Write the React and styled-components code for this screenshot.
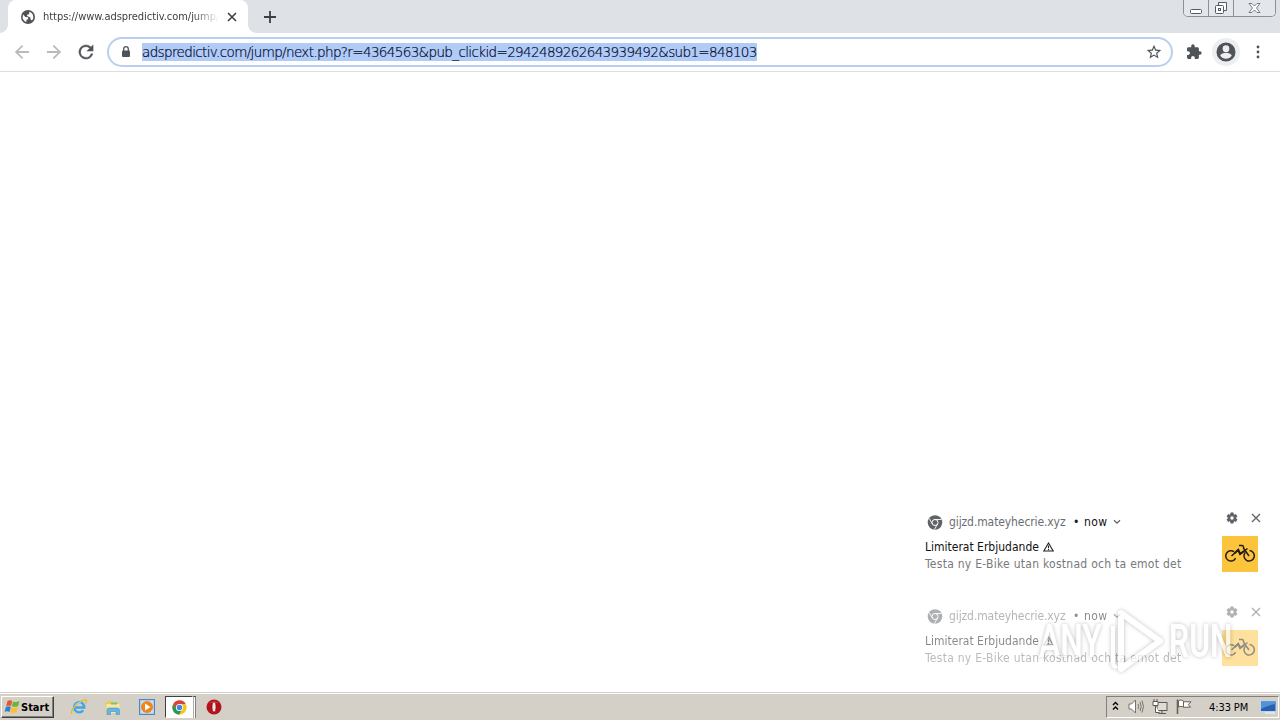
import React from "react";
import styled, { createGlobalStyle } from "styled-components";

const GlobalStyle = createGlobalStyle`
  * {
    box-sizing: border-box;
  }

  body {
    margin: 0;
    overflow: hidden;
    background: #fff;
    font-family: "DejaVu Sans Condensed", "DejaVu Sans", sans-serif;
  }

  svg {
    display: block;
    flex: none;
  }
`;

const notifications = [
  { id: 1, faded: false },
  { id: 2, faded: true },
];

const GlobeIcon = () => (
  <svg width="14" height="14" viewBox="0 0 14 14">
    <circle cx="7" cy="7" r="7" fill="#505357" />
    <path
      d="M2 4.5 L4.5 7 L7 7.2 L7.3 9 L5.6 9.8 L5.2 12 C3 11.2 1.6 9.3 1.6 7 Z M8.4 1.8 C10.5 2.4 12.3 4.3 12.3 7 C12.3 8.4 11.8 9.5 11 10.4 L9.6 9.4 L9.4 7.6 L6 6 L6.2 4.8 L8 4.2 Z"
      fill="#fff"
    />
  </svg>
);

const ChromeMono = () => (
  <svg width="16" height="15" viewBox="-0.5 0 16 15">
    <circle cx="7.5" cy="7.5" r="7.3" fill="#5f6368" />
    <circle cx="7.5" cy="7.5" r="3" fill="none" stroke="#fff" strokeWidth="1" />
    <path d="M7.5 4.5H14M4.9 9L1.6 3.4M10.1 9L6.9 14.6" stroke="#fff" strokeWidth="0.9" />
  </svg>
);

const GearIcon = () => (
  <svg width="12" height="12" viewBox="1 1 22 22">
    <path
      fill="#5f6368"
      stroke="#5f6368"
      d="M19.14 12.94c.04-.3.06-.61.06-.94 0-.32-.02-.64-.07-.94l2.03-1.58a.49.49 0 0 0 .12-.61l-1.92-3.32a.488.488 0 0 0-.59-.22l-2.39.96c-.5-.38-1.03-.7-1.62-.94l-.36-2.54a.484.484 0 0 0-.48-.41h-3.84c-.24 0-.43.17-.47.41l-.36 2.54c-.59.24-1.13.57-1.62.94l-2.39-.96c-.22-.08-.47 0-.59.22L2.74 8.87c-.12.21-.08.47.12.61l2.03 1.58c-.05.3-.09.63-.09.94s.02.64.07.94l-2.03 1.58a.49.49 0 0 0-.12.61l1.92 3.32c.12.22.37.29.59.22l2.39-.96c.5.38 1.03.7 1.62.94l.36 2.54c.05.24.24.41.48.41h3.84c.24 0 .44-.17.47-.41l.36-2.54c.59-.24 1.13-.56 1.62-.94l2.39.96c.22.08.47 0 .59-.22l1.92-3.32c.12-.22.07-.47-.12-.61l-2.01-1.58zM12 15.6A3.6 3.6 0 1 1 12 8.4a3.6 3.6 0 0 1 0 7.2z"
    />
  </svg>
);

const WarningIcon = () => (
  <svg width="11" height="10" viewBox="0 0 11 10">
    <path d="M5.5 1L10.2 9H0.8Z" fill="none" stroke="#222" strokeWidth="1.1" />
    <path d="M5.5 3.6V6.2M5.5 7.1V8.2" stroke="#222" strokeWidth="1.1" />
  </svg>
);

const BikeIcon = () => (
  <svg width="36" height="36" viewBox="0 0 36 36" fill="none" stroke="#211a17" strokeWidth="1.5">
    <path d="M13.6 22.2A5.2 5.2 0 1 1 12 15.7" />
    <path d="M23.4 16.2A5.200 5.200 0 1 0 27.500 14.600" />
    <path d="M17 9.500H20.300Q21.500 9.500 21.700 12.500L27 20" />
    <path d="M9.500 20L16 14L18 18L25.500 12.500" />
    <path d="M12.500 17.200L16.300 13.800L18.200 18L22 15" strokeWidth="2" />
  </svg>
);

const WindowGlyphs = {
  min: (
    <svg width="14" height="8" viewBox="0 0 14 8">
      <rect x="1.5" y="3.5" width="11" height="4" rx="1" fill="#fff" stroke="#555a66" />
    </svg>
  ),
  restore: (
    <svg width="14" height="14" viewBox="0 0 14 14" fill="#fff" stroke="#555a66">
      <path d="M4.5 1.5H12.5V9.5H9.5M4.5 1.5V4.5" />
      <rect x="1.5" y="4.5" width="8" height="8" rx="1" />
      <rect x="4.5" y="7.5" width="2" height="2" />
    </svg>
  ),
  close: (
    <svg width="13" height="12" viewBox="0 0 13 12">
      <path
        d="M1 1.5H4L6.5 4L9 1.5H12L8.5 6L12 10.5H9L6.5 8L4 10.5H1L4.5 6Z"
        fill="#fff"
        stroke="#686d78"
        strokeWidth="0.9"
      />
    </svg>
  ),
};

const WindowsFlag = () => (
  <svg width="17" height="16" viewBox="0 0 17 16">
    <path d="M3.5 2C5.2 1 6.7 1.2 8.2 2L7 7C5.5 6.2 4 6.2 2.2 7Z" fill="#e9552b" />
    <path d="M9 2.4C10.8 3.4 12.8 3.4 15.5 2L14.2 7C12 8 10 8.2 7.9 7.3Z" fill="#6cb33f" />
    <path d="M2 7.8C3.8 7 5.3 7.1 6.8 7.9L5.5 13C4 12.1 2.4 12 .6 12.8Z" fill="#2f7fd0" />
    <path d="M7.6 8.3C9.6 9.1 11.5 9.1 14 8L12.7 13C10.5 14.2 8.2 14.3 6.3 13.3Z" fill="#f9c22d" />
  </svg>
);

const IeIcon = () => (
  <svg width="18" height="18" viewBox="0 0 18 18" fill="none">
    <path d="M4.5 9.500H14.2A5.1 5.1 0 1 0 13.2 12.3" stroke="#3fa7e6" strokeWidth="2.4" />
    <path d="M2 15.700C-1 13.500 9 2 16 1.900C17.4 2.500 16.3 4.500 15.3 5.700" stroke="#e6b93a" strokeWidth="1.3" />
    <path d="M4.8 8C5.5 5.500 8 4.1 11 4.800" stroke="#9bdcf8" strokeWidth="0.8" />
  </svg>
);

const FolderIcon = () => (
  <svg width="17" height="17" viewBox="1 0 17 17">
    <path d="M1.5 3L7 1.5L8 3H14.5V14H1.5Z" fill="#e9ca63" />
    <path d="M2.5 5H15.5V14H2.5Z" fill="#f8e7a2" />
    <path d="M7 3.5H13V5.5H7Z" fill="#7ec46f" />
    <path d="M3 15.500V11Q3 9 5 9H13Q15.5 9 15.5 11V15.500H12V12.5H6.5V15.500Z" fill="#62b7e5" stroke="#3b87bd" strokeWidth="0.5" />
  </svg>
);

const PlayerIcon = () => (
  <svg width="17" height="17" viewBox="0 0 17 17">
    <rect x="0.5" y="0.5" width="15" height="15" fill="#a9cff2" stroke="#4d86c4" />
    <rect x="2.5" y="2.5" width="11" height="11" fill="#e5f1fb" />
    <circle cx="8" cy="8" r="6" fill="#f08519" />
    <path d="M6 4.6L11.5 8L6 11.4Z" fill="#fff" />
  </svg>
);

const ChromeIcon = () => (
  <svg width="15" height="15" viewBox="0 0 16 16">
    <circle cx="8" cy="8" r="7.6" fill="#f6c51d" />
    <path d="M8 .4A7.6 7.6 0 0 1 14.6 4.2H8L4.7 9.9L1.4 4.2A7.6 7.6 0 0 1 8 .4Z" fill="#dd4335" />
    <path d="M1.4 4.2L4.7 9.9L8 11.8H9.6L7.5 15.6A7.6 7.6 0 0 1 1.4 4.2Z" fill="#27975b" />
    <circle cx="8" cy="8" r="3.8" fill="#fff" />
    <circle cx="8" cy="8" r="2.9" fill="#4384ef" />
  </svg>
);

const OperaIcon = () => (
  <svg width="16" height="16" viewBox="0 0 16 16">
    <circle cx="8" cy="8" r="7.5" fill="#b5121b" />
    <path d="M3 4.5A7 7 0 0 1 13 4.5Q8 2 3 4.5Z" fill="#dc6469" />
    <ellipse cx="8" cy="8" rx="2" ry="5" fill="#f3e3e1" stroke="#7c0b11" strokeWidth="0.6" />
  </svg>
);

const TrayIcons = () => (
  <>
    <svg width="8" height="13" viewBox="0 0 8 13" fill="none" stroke="#000" strokeWidth="1.4">
      <path d="M1 4L3.5 1.5L6 4M1 8.5L3.5 6L6 8.5" />
    </svg>
    <svg width="17" height="17" viewBox="-0.5 0.5 17 17" fill="none" stroke="#77736c">
      <path d="M1.5 5.5H4L8 1.5V14.5L4 10.5H1.5Z" fill="#fff" />
      <path d="M10.5 5.5Q12 8 10.5 10.5M12.5 3.5Q15 8 12.5 12.5M14.5 2Q17.5 8 14.5 14" />
    </svg>
    <svg width="17" height="17" viewBox="-0.5 0 17 17" stroke="#5d5b56">
      <rect x="5.5" y="3.5" width="10" height="8" fill="#dedcd7" />
      <path d="M7 14.5H14.5M10.5 12V14" fill="none" />
      <path d="M1.5 2.5H6.5V6.5H1.5ZM2.5 0V2M5.5 0V2M4 7V13.5H8" fill="#fff" />
    </svg>
    <svg width="17" height="18" viewBox="0 0 17 18" fill="#fff" stroke="#66625b">
      <path d="M2.5 1.5V16" strokeWidth="1.6" />
      <path d="M3.5 2.5Q6 1 8.5 3V9Q6 7.5 3.5 9Z" />
      <path d="M8.5 3.8H16L13.300 6.5L15.500 9.2H8.5Z" />
    </svg>
  </>
);

const Notification = ({ faded }) => (
  <Card $faded={faded}>
    <CardText>
      <Source>
        <ChromeMono />
        <Origin>gijzd.mateyhecrie.xyz</Origin>
        <Dot>•</Dot>
        <When>now</When>
        <svg width="8" height="6" viewBox="0 0 8 6">
          <path d="M1 1.2L4 4.2L7 1.2" fill="none" stroke="#5f6368" strokeWidth="1.3" />
        </svg>
      </Source>
      <CardTitle>
        <span>Limiterat Erbjudande</span>
        <WarningIcon />
      </CardTitle>
      <Message>Testa ny E-Bike utan kostnad och ta emot det</Message>
    </CardText>
    <CardSide>
      <CardActions>
        <GearIcon />
        <svg width="10" height="10" viewBox="0 0 10 10">
          <path d="M1 1L9 9M9 1L1 9" stroke="#5f6368" strokeWidth="1.3" />
        </svg>
      </CardActions>
      <Thumb>
        <BikeIcon />
      </Thumb>
    </CardSide>
  </Card>
);

const App = () => {
  return (
    <Screen>
      <GlobalStyle />
      <TabStrip>
        <Tab>
          <GlobeIcon />
          <TabTitle>https://www.adspredictiv.com/jump/</TabTitle>
          <svg width="10" height="10" viewBox="0 0 10 10">
            <path d="M1 1L9 9M9 1L1 9" stroke="#3c4043" strokeWidth="1.6" />
          </svg>
        </Tab>
        <NewTab>
          <svg width="12" height="12" viewBox="0 0 12 12">
            <path d="M6 0V12M0 6H12" stroke="#3c4043" strokeWidth="1.8" />
          </svg>
        </NewTab>
        <WindowButtons>
          <WindowButton $width={24}>{WindowGlyphs.min}</WindowButton>
          <WindowButton $width={25}>{WindowGlyphs.restore}</WindowButton>
          <WindowButton $width={42}>{WindowGlyphs.close}</WindowButton>
        </WindowButtons>
      </TabStrip>

      <Toolbar>
        <NavButtons>
          <svg width="16" height="16" viewBox="3 3 18 18" fill="#b8babd">
            <path d="M20 11H7.83l5.59-5.59L12 4l-8 8 8 8 1.41-1.41L7.83 13H20v-2z" />
          </svg>
          <svg width="16" height="16" viewBox="3 3 18 18" fill="#b8babd">
            <path d="M12 4l-1.41 1.41L16.17 11H4v2h12.17l-5.58 5.59L12 20l8-8z" />
          </svg>
          <svg width="16" height="16" viewBox="3 3 18 18" fill="#505357">
            <path d="M17.65 6.35A7.958 7.958 0 0 0 12 4a8 8 0 1 0 7.73 10h-2.08A6 6 0 1 1 12 6c1.66 0 3.14.69 4.22 1.78L13 11h7V4l-2.35 2.35z" stroke="#505357" strokeWidth="0.5" />
          </svg>
        </NavButtons>
        <AddressBar>
          <svg width="10" height="12" viewBox="0 0 10 12">
            <path d="M2.7 5V3A2.3 2.3 0 0 1 7.3 3V5" fill="none" stroke="#505357" strokeWidth="1.3" />
            <rect x="1" y="4.5" width="8" height="6.500" rx="1" fill="#505357" />
          </svg>
          <Url>
            <Selected>
              adspredictiv.com/jump/next.php?r=4364563&amp;pub_clickid=2942489262643939492&amp;sub1=848103
            </Selected>
          </Url>
          <svg width="16" height="16" viewBox="1 1 22 22" fill="#505357">
            <path d="M22 9.24l-7.19-.62L12 2 9.19 8.63 2 9.24l5.46 4.73L5.82 21 12 17.27 18.18 21l-1.63-7.03L22 9.24zM12 15.4l-3.76 2.27 1-4.28-3.32-2.88 4.38-.38L12 6.1l1.71 4.04 4.38.38-3.32 2.88 1 4.28L12 15.4z" />
          </svg>
        </AddressBar>
        <svg width="16" height="16" viewBox="0.5 0.5 23 23" fill="#505357">
          <path d="M20.5 11H19V7c0-1.1-.9-2-2-2h-4V3.500a2.500 2.500 0 0 0-5 0V5H4c-1.100 0-1.990.9-1.990 2v3.800H3.500c1.490 0 2.700 1.210 2.700 2.700s-1.210 2.700-2.700 2.700H2V20c0 1.100.9 2 2 2h3.800v-1.500c0-1.490 1.210-2.700 2.700-2.700s2.700 1.210 2.700 2.700V22H17c1.100 0 2-.9 2-2v-4h1.500a2.500 2.500 0 0 0 0-5z" />
        </svg>
        <Avatar>
          <svg width="20" height="20" viewBox="1.5 1.5 21 21" fill="#505357">
            <path d="M12 2a10 10 0 1 0 0 20 10 10 0 0 0 0-20zm0 3a3.500 3.500 0 1 1 0 7 3.500 3.500 0 0 1 0-7zm0 14.200a7.200 7.200 0 0 1-6-3.220c.030-1.990 4-3.080 6-3.080s5.970 1.090 6 3.080a7.200 7.200 0 0 1-6 3.220z" />
          </svg>
        </Avatar>
        <svg width="4" height="14" viewBox="0 0 4 14" fill="#505357">
          <circle cx="2" cy="2" r="1.4" />
          <circle cx="2" cy="7" r="1.4" />
          <circle cx="2" cy="12" r="1.4" />
        </svg>
      </Toolbar>

      <Page>
        {notifications.map((item) => (
          <Notification key={item.id} faded={item.faded} />
        ))}
        <Watermark>
          <WatermarkText $width={70}>ANY</WatermarkText>
          <svg width="60" height="66" viewBox="0 0 60 66">
            <path d="M4 18V56Q5 60 8 58" fill="none" stroke="#fff" strokeWidth="4" />
            <path d="M12 5L51 33L12 61Z" fill="none" stroke="#fff" strokeWidth="6" strokeLinejoin="round" />
          </svg>
          <WatermarkText $width={66}>RUN</WatermarkText>
        </Watermark>
      </Page>

      <Taskbar>
        <StartButton>
          <WindowsFlag />
          <span>Start</span>
        </StartButton>
        <QuickLaunch>
          <IeIcon />
          <FolderIcon />
          <PlayerIcon />
        </QuickLaunch>
        <ActiveTask>
          <ChromeIcon />
        </ActiveTask>
        <TaskEdge />
        <OperaIcon />
        <Tray>
          <TrayIcons />
          <Clock>4:33 PM</Clock>
          <svg width="17" height="15" viewBox="0 0 17 15">
            <rect x="0.5" y="1" width="15.500" height="10.500" fill="#285fae" stroke="#bfd5ea" />
            <path d="M1 1.500H15.500V4Q8 5 1 9Z" fill="#5192d8" />
            <path d="M5 13H15" stroke="#e4edf6" strokeWidth="1.500" />
          </svg>
        </Tray>
      </Taskbar>
    </Screen>
  );
};

const Screen = styled.div`
  display: flex;
  flex-direction: column;
  width: 1280px;
  height: 720px;
  overflow: hidden;
  background: #fff;
`;

const TabStrip = styled.div`
  display: flex;
  height: 33px;
  padding-left: 8px;
  background: #dee1e6;
`;

const Tab = styled.div`
  position: relative;
  display: flex;
  align-items: center;
  width: 240px;
  height: 33px;
  padding: 0 11px 0 13px;
  border-radius: 8px 8px 0 0;
  background: #fff;

  &::before,
  &::after {
    content: "";
    position: absolute;
    bottom: 0;
    width: 8px;
    height: 8px;
  }

  &::before {
    left: -8px;
    background: radial-gradient(circle at 0 0, #dee1e6 7.5px, #fff 8px);
  }

  &::after {
    right: -8px;
    background: radial-gradient(circle at 100% 0, #dee1e6 7.5px, #fff 8px);
  }
`;

const TabTitle = styled.div`
  width: 175px;
  margin: 0 9px 0 8px;
  overflow: hidden;
  white-space: nowrap;
  font-size: 11px;
  letter-spacing: -0.04px;
  color: #3c4043;
  mask-image: linear-gradient(to right, #000 150px, transparent 176px);
`;

const NewTab = styled.div`
  display: flex;
  align-items: center;
  padding-left: 16px;
`;

const WindowButtons = styled.div`
  display: flex;
  height: 17px;
  margin-left: auto;
  margin-right: 4px;
  border: 1px solid #8b909b;
  border-top: none;
  border-radius: 0 0 5px 5px;
`;

const WindowButton = styled.div`
  display: flex;
  align-items: center;
  justify-content: center;
  width: ${(props) => props.$width}px;
  border-left: 1px solid #8b909b;
  background: #e3e6eb;

  &:first-child {
    border-left: none;
    border-radius: 0 0 0 4px;
    padding-top: 3px;
  }

  &:last-child {
    border-radius: 0 0 4px 0;
  }
`;

const Toolbar = styled.div`
  display: flex;
  align-items: center;
  height: 39px;
  padding: 0 20px 0 14px;
  border-bottom: 1px solid #dcdee1;
  background: #fff;
`;

const NavButtons = styled.div`
  display: flex;
  gap: 16px;
  width: 93px;
`;

const AddressBar = styled.div`
  display: flex;
  align-items: center;
  width: 1066px;
  height: 30px;
  flex: none;
  margin-right: 13px;
  padding: 0 9px 0 12px;
  border: 2px solid #b8cff0;
  border-radius: 15px;
`;

const Url = styled.div`
  flex: 1;
  margin-left: 11px;
  line-height: 18px;
`;

const Selected = styled.span`
  display: inline-block;
  height: 18px;
  background: #b0cbf8;
  color: #00071c;
  white-space: nowrap;
  font-family: "DejaVu Sans Light", "DejaVu Sans", sans-serif;
  font-size: 13.5px;
  font-weight: 200;
  letter-spacing: -0.635px;
  -webkit-text-stroke: 0.2px #00071c;
  vertical-align: top;
`;

const Avatar = styled.div`
  display: flex;
  align-items: center;
  justify-content: center;
  width: 28px;
  height: 28px;
  flex: none;
  margin: 0 16px 0 10px;
  border-radius: 50%;
  background: #eceef0;
`;

const Page = styled.div`
  position: relative;
  display: flex;
  flex: 1;
  flex-direction: column;
  align-items: flex-end;
  justify-content: flex-end;
  padding: 0 22px 1px 0;
`;

const Card = styled.div`
  display: flex;
  justify-content: space-between;
  width: 333px;
  height: 94px;
  opacity: ${(props) => (props.$faded ? 0.5 : 1)};
`;

const CardText = styled.div`
  display: flex;
  flex-direction: column;
  padding-top: 10px;
  white-space: nowrap;
  font-size: 12px;
  color: #6a6d71;
`;

const Source = styled.div`
  display: flex;
  align-items: center;
  height: 18px;
  padding-left: 2px;
`;

const Origin = styled.span`
  width: 117px;
  margin-left: 6px;
  letter-spacing: -0.1px;
`;

const Dot = styled.span`
  width: 7px;
  margin-left: 7px;
  color: #202124;
`;

const When = styled.span`
  width: 24px;
  margin: 0 5px 0 4px;
  letter-spacing: 0.45px;
  color: #111;
`;

const CardTitle = styled.div`
  display: flex;
  align-items: center;
  gap: 4px;
  height: 17px;
  margin-top: 7px;
  color: #111;
`;

const Message = styled.div`
  height: 17px;
  line-height: 18px;
  letter-spacing: 0.27px;
  color: #77797c;
`;

const CardSide = styled.div`
  display: flex;
  flex-direction: column;
  align-items: flex-end;
`;

const CardActions = styled.div`
  display: flex;
  align-items: center;
  gap: 13px;
  height: 30px;
  margin-right: -3px;
`;

const Thumb = styled.div`
  width: 36px;
  height: 36px;
  margin-top: 3px;
  background: #fcc43c;
`;

/* overlay mark in the bottom right corner */
const Watermark = styled.div`
  position: absolute;
  right: 45px;
  bottom: 18px;
  display: flex;
  align-items: center;
  opacity: 0.65;
  filter: drop-shadow(0 0 2px rgba(0, 0, 0, 0.38));
`;

const WatermarkText = styled.div`
  width: ${(props) => props.$width}px;
  color: #fff;
  font-family: "Roboto", sans-serif;
  font-size: 46px;
  font-weight: 600;
  line-height: 46px;
  transform: scaleX(0.69);
  transform-origin: left;
  white-space: nowrap;
`;

const Taskbar = styled.div`
  display: flex;
  align-items: center;
  height: 28px;
  padding: 1px 1px 0 1px;
  border-top: 1px solid #d4d0c8;
  box-shadow: inset 0 1px 0 #fff;
  background: #d4d0c8;
`;

const StartButton = styled.div`
  display: flex;
  align-items: center;
  width: 53px;
  height: 22px;
  padding-left: 2px;
  border: 1px solid;
  border-color: #fff #404040 #404040 #fff;
  box-shadow: inset -1px -1px 0 #808080;
  font-size: 11px;
  font-weight: 700;
  color: #000;
`;

const QuickLaunch = styled.div`
  display: flex;
  align-items: center;
  gap: 17px;
  margin-left: 16px;
`;

const ActiveTask = styled.div`
  display: flex;
  align-items: center;
  justify-content: center;
  width: 28px;
  height: 22px;
  margin-left: 9px;
  border: 1px solid;
  border-color: #404040 #fff #fff #404040;
  background: #fff;
`;

const TaskEdge = styled.div`
  width: 3px;
  height: 22px;
  margin-right: 10px;
  border-top: 1px solid #404040;
  border-left: 1px solid #b0ada6;
  border-right: 1px solid #808080;
  background: #fff;
`;

const Tray = styled.div`
  display: flex;
  align-items: center;
  gap: 7px;
  width: 173px;
  height: 22px;
  margin-left: auto;
  padding-left: 5px;
  border: 1px solid;
  border-color: #808080 #fff #fff #808080;
`;

const Clock = styled.span`
  width: 44px;
  margin-left: 10px;
  white-space: nowrap;
  font-size: 11px;
  letter-spacing: -0.1px;
  color: #000;
`;

export default App;
